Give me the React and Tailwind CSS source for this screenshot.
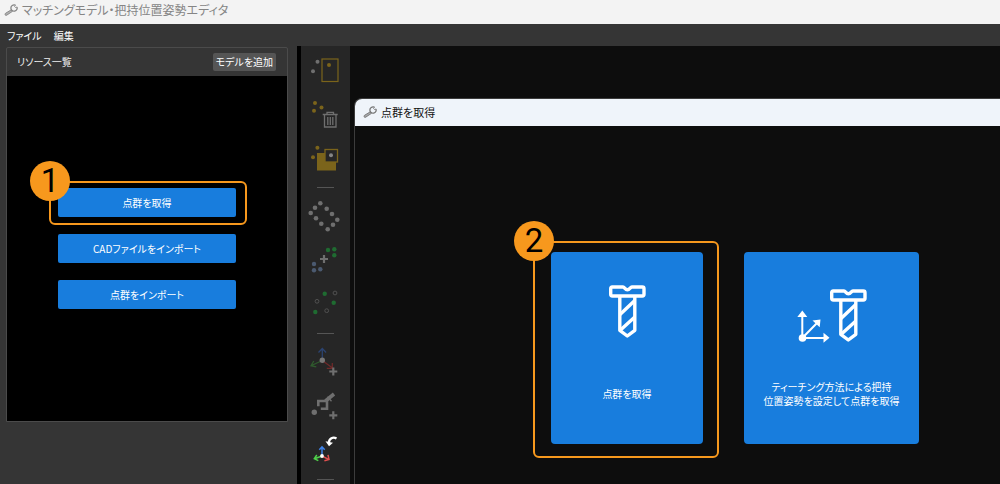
import React from "react";

const YELLOW = "#7b641b";
const GREY = "#6f6f6f";
const GREEN = "#1f6b31";
const SLATE = "#4b5a70";

function Dots({ points, fill, r = 2 }) {
  return points.map(([x, y]) => <circle key={`${x}-${y}`} cx={x} cy={y} r={r} fill={fill} />);
}

function Plus({ x, y }) {
  return <path d={`M${x - 4} ${y}h8M${x} ${y - 4}v8`} stroke={GREY} strokeWidth="2.2" />;
}

function WrenchIcon({ className, color }) {
  return (
    <svg viewBox="0 0 14 12" className={className} fill="none" stroke={color} aria-hidden="true">
      <path d="M7.300 5.800 1.500 9.300a1.100 1.100 0 0 0 1.200 1.900L8.500 7.300z" fill={color} fillOpacity="0.6" strokeWidth="0.9" />
      <path d="M11.500 1.200C9 .3 6.800 1.900 6.900 4.200c.1 2 1.900 3.300 3.800 2.900 2-.4 2.900-2.300 2.200-4.100" strokeWidth="1.300" />
      <path d="M11.500 1.200 10.600 2.600l.9.900 1.400-.5" strokeWidth="0.900" />
    </svg>
  );
}

const tools = [
  [
    {
      label: "範囲を選択",
      art: (
        <>
          <rect x="21" y="11" width="16" height="22.500" fill="none" stroke={YELLOW} strokeWidth="1.2" />
          <Dots points={[[16.500, 13.700], [12, 23.300]]} fill={GREY} />
          <Dots points={[[28, 17]]} fill={YELLOW} />
        </>
      ),
    },
    {
      label: "点を削除",
      art: (
        <>
          <Dots points={[[14, 11], [13, 18.700], [20.500, 15.500]]} fill={YELLOW} />
          <g fill="none" stroke={GREY} strokeWidth="1.3">
            <path d="M21.700 22.500h15M26 22v-1.700h6.500V22M23.500 23v12h11.500V23" />
            <path d="M26.800 25v8M29.300 25v8M31.800 25v8" />
          </g>
        </>
      ),
    },
    {
      label: "範囲を反転",
      art: (
        <>
          <Dots points={[[16.400, 11.700], [12, 21.300]]} fill={YELLOW} />
          <path d="M16 17h19v17.500H16z" fill={YELLOW} />
          <rect x="24" y="13.500" width="12.500" height="12.500" fill="#262626" stroke={YELLOW} strokeWidth="1.3" />
          <Dots points={[[30, 19.300]]} fill="#858585" />
        </>
      ),
    },
  ],
  [
    {
      label: "輪郭点",
      art: (
        <Dots
          points={[[19.300, 9.300], [25.700, 14.700], [31, 20], [36.300, 25.700], [32, 30.700], [26.700, 35.300], [20.300, 29.700], [15, 24.300], [9.700, 19], [14, 13.700]]}
          fill={GREY}
          r={2.300}
        />
      ),
    },
    {
      label: "点群を結合",
      art: (
        <>
          <Dots points={[[27, 12], [33.300, 11.300], [33.300, 17.300]]} fill={GREEN} r={2.200} />
          <Plus x={23} y={21} />
          <Dots points={[[13, 26], [13, 32.300], [19.300, 31.300]]} fill={SLATE} r={2.200} />
        </>
      ),
    },
    {
      label: "ダウンサンプリング",
      art: (
        <>
          <Dots points={[[23.700, 11.700], [32.700, 20.700], [14.300, 30]]} fill={GREEN} r={2.200} />
          <g fill="none" stroke="#505050">
            <circle cx="34" cy="11" r="1.900" />
            <circle cx="16" cy="19.300" r="1.900" />
            <circle cx="25.700" cy="28.700" r="1.900" />
          </g>
        </>
      ),
    },
  ],
  [
    {
      label: "把持位置姿勢を追加",
      art: (
        <>
          <g fill="none" strokeWidth="1.300">
            <path d="M21.300 20V8.500M17.500 12.500l3.800-4 3.800 4" stroke="#2b4370" />
            <path d="M21.300 20.500 10.500 25.500M12.800 21l-2.800 4.700 5.300 1.200" stroke="#2f5a2d" />
            <path d="M21.300 20.500 31.500 28M31.300 23v5.300h-5.500" stroke="#6e2a2a" />
          </g>
          <Dots points={[[21.300, 20.300]]} fill="#777777" r={2.700} />
          <Plus x={32.300} y={31.500} />
        </>
      ),
    },
    {
      label: "ロボットで教示",
      art: (
        <>
          <g fill="none" stroke={GREY}>
            <path d="M17.300 22.300v-5.300H26v7.800H19.800" strokeWidth="2.600" />
            <path d="M24.500 17 33 10" strokeWidth="3.600" />
            <path d="M26.500 12.800l4 4.500" strokeWidth="1.300" />
          </g>
          <Dots points={[[13.300, 28.300]]} fill={GREY} r={2.700} />
          <Plus x={32.300} y={31.300} />
        </>
      ),
    },
    {
      label: "座標系を変更",
      art: (
        <>
          <g fill="none" strokeWidth="1.500">
            <path d="M21 28v-9M18.300 21.800 21 18.800l2.700 3" stroke="#3e83ea" />
            <path d="M21 28l-7.500 2.700M15.800 27l-2.500 3.700 4 2" stroke="#4fd04a" />
            <path d="M21 28l6.500 3.300M27 26.800l1 4.700-4.600 1.300" stroke="#e04f4f" />
          </g>
          <Dots points={[[21, 28]]} fill="#ffffff" r={1.900} />
          <path d="M35.500 10.500c-3.500-2.200-7.500 0-7.700 4.500" fill="none" stroke="#ffffff" strokeWidth="2.300" />
          <path d="M24.500 13.300l3.500 5 4-3.600z" fill="#ffffff" />
        </>
      ),
    },
  ],
];

function Toolbar() {
  return (
    <nav aria-label="ツール" className="flex w-[53px] shrink-0 flex-col border-l-4 border-black bg-[#262626] pt-0.5">
      {tools.map((group, i) => (
        <div key={i} className="flex shrink-0 flex-col">
          {group.map((tool) => (
            <button key={tool.label} type="button" aria-label={tool.label} className="h-11 w-12">
              <svg viewBox="0 0 48 44" className="h-11 w-12" aria-hidden="true">
                {tool.art}
              </svg>
            </button>
          ))}
          <div className="flex h-3.5 w-12 items-center justify-center">
            <div className="h-px w-[17px] bg-[#555555]" />
          </div>
        </div>
      ))}
    </nav>
  );
}

function ScrewShape() {
  return (
    <g fill="none" stroke="#ffffff" strokeWidth="3.400" strokeLinejoin="round">
      <path d="M3.200 2H14c1.500 0 2 2.800 4.400 2.800S21.300 2 22.800 2h10.500c1 0 1.700.7 1.700 1.700v5.600c0 1-.7 1.700-1.700 1.700H3.400C2.400 11 1.700 10.300 1.700 9.300V3.700C1.700 2.700 2.300 2 3.200 2z" />
      <path d="M10.800 11v34.300l7.500 5.700 7.500-5.700V11" />
      <path d="M25.800 15.500 11 29.500M25.800 32 11.500 45" />
    </g>
  );
}

function ScrewIcon() {
  return (
    <svg viewBox="0 0 37 53" className="h-[53px] w-[37px]" aria-hidden="true">
      <ScrewShape />
    </svg>
  );
}

function ScrewWithAxesIcon() {
  return (
    <svg viewBox="0 0 70 54" className="h-[54px] w-[70px]" aria-hidden="true">
      <g transform="translate(33 0)">
        <ScrewShape />
      </g>
      <g stroke="#ffffff" strokeWidth="2" fill="none">
        <path d="M5.300 49V25M5.300 49H28M5.300 49 20.500 33.500" />
      </g>
      <g fill="#ffffff">
        <circle cx="5.500" cy="49" r="3.800" />
        <path d="M5.300 21.500 10.300 28H.3zM32.500 48.800 26.500 43.800v10zM23.500 30.500 22.700 38.300 15.500 31.500z" />
      </g>
    </svg>
  );
}

function StepBadge({ children }) {
  return (
    <span className="absolute -top-[22px] -left-[21px] flex size-10 items-center justify-center rounded-full bg-[#f7981d] font-[Roboto,sans-serif] text-[33px] leading-10 text-black">
      {children}
    </span>
  );
}

function SourceButton({ children }) {
  return (
    <button type="button" className="h-[29px] w-full rounded-xs bg-[#187ddd] text-[10px] leading-4 text-white">
      {children}
    </button>
  );
}

function ResourcePanel() {
  return (
    <aside className="flex w-[297px] shrink-0 flex-col pt-px pr-[9px] pb-[62px] pl-1.5">
      <section className="flex flex-1 flex-col rounded-t-xs border border-[#4b4b4b]">
        <header className="flex h-7 items-center justify-between pr-[11px] pl-2.5">
          <h2 className="text-[10px] leading-4 text-[#eeeeee]">リソース一覧</h2>
          <button type="button" className="h-[18px] rounded-xs bg-[#555555] px-[3px] text-[10px] leading-4 text-white">
            モデルを追加
          </button>
        </header>
        <div className="flex flex-1 flex-col items-center justify-center bg-black">
          <div className="flex w-[178px] flex-col gap-[17px]">
            <div className="relative">
              <SourceButton>点群を取得</SourceButton>
              <div className="pointer-events-none absolute -top-[7px] -right-[11px] -bottom-2 -left-[9px] rounded-md border-2 border-[#f7981d]">
                <StepBadge>1</StepBadge>
              </div>
            </div>
            <SourceButton>CADファイルをインポート</SourceButton>
            <SourceButton>点群をインポート</SourceButton>
          </div>
        </div>
      </section>
    </aside>
  );
}

function CaptureDialog() {
  return (
    <section aria-label="点群を取得" className="flex flex-1 flex-col overflow-hidden rounded-tl-lg border-t border-l border-[#3c3c3c]">
      <header className="flex h-[27px] shrink-0 items-center gap-1 bg-[#eff4fa] pb-0.5 pl-2">
        <WrenchIcon className="h-3 w-3.5" color="#777777" />
        <h2 className="text-[11px] leading-4 text-[#111111]">点群を取得</h2>
      </header>
      <div className="flex items-start gap-[41px] pt-[126px] pl-[196px]">
        <div className="relative shrink-0">
          <button type="button" className="flex h-48 w-[152px] flex-col items-center rounded-sm bg-[#187ddd] pt-[33px] text-white">
            <ScrewIcon />
            <span className="mt-[42px] flex h-7 items-center text-[10px] leading-3.5">点群を取得</span>
          </button>
          <div className="pointer-events-none absolute -top-[11px] -right-4 -bottom-3.5 -left-[18px] rounded-md border-2 border-[#f7981d]">
            <StepBadge>2</StepBadge>
          </div>
        </div>
        <button type="button" className="flex h-48 w-[175px] shrink-0 flex-col items-center rounded-sm bg-[#187ddd] pt-[37px] text-white">
          <ScrewWithAxesIcon />
          <span className="mt-[37px] text-[10px] leading-3.5 whitespace-nowrap">
            ティーチング方法による把持
            <br />
            位置姿勢を設定して点群を取得
          </span>
        </button>
      </div>
    </section>
  );
}

export default function App() {
  return (
    <div className="flex h-screen flex-col overflow-hidden bg-[#353535] font-['Noto_Sans_CJK_JP',sans-serif] [font-feature-settings:'palt']">
      <header className="flex h-6 shrink-0 items-center gap-1 bg-[#f3f3f3] pb-1 pl-1">
        <WrenchIcon className="h-3 w-3.5" color="#858585" />
        <h1 className="text-xs leading-4 text-[#858585]">マッチングモデル・把持位置姿勢エディタ</h1>
      </header>
      <nav aria-label="メニュー" className="flex h-[22px] shrink-0 items-center gap-3 pt-0.5 pl-[7px] text-[10px] leading-4 text-white">
        <button type="button">ファイル</button>
        <button type="button">編集</button>
      </nav>
      <div className="flex min-h-0 flex-1">
        <ResourcePanel />
        <Toolbar />
        <main className="flex min-w-0 flex-1 flex-col bg-[#0d0d0d] pt-[52px] pl-1">
          <CaptureDialog />
        </main>
      </div>
    </div>
  );
}
